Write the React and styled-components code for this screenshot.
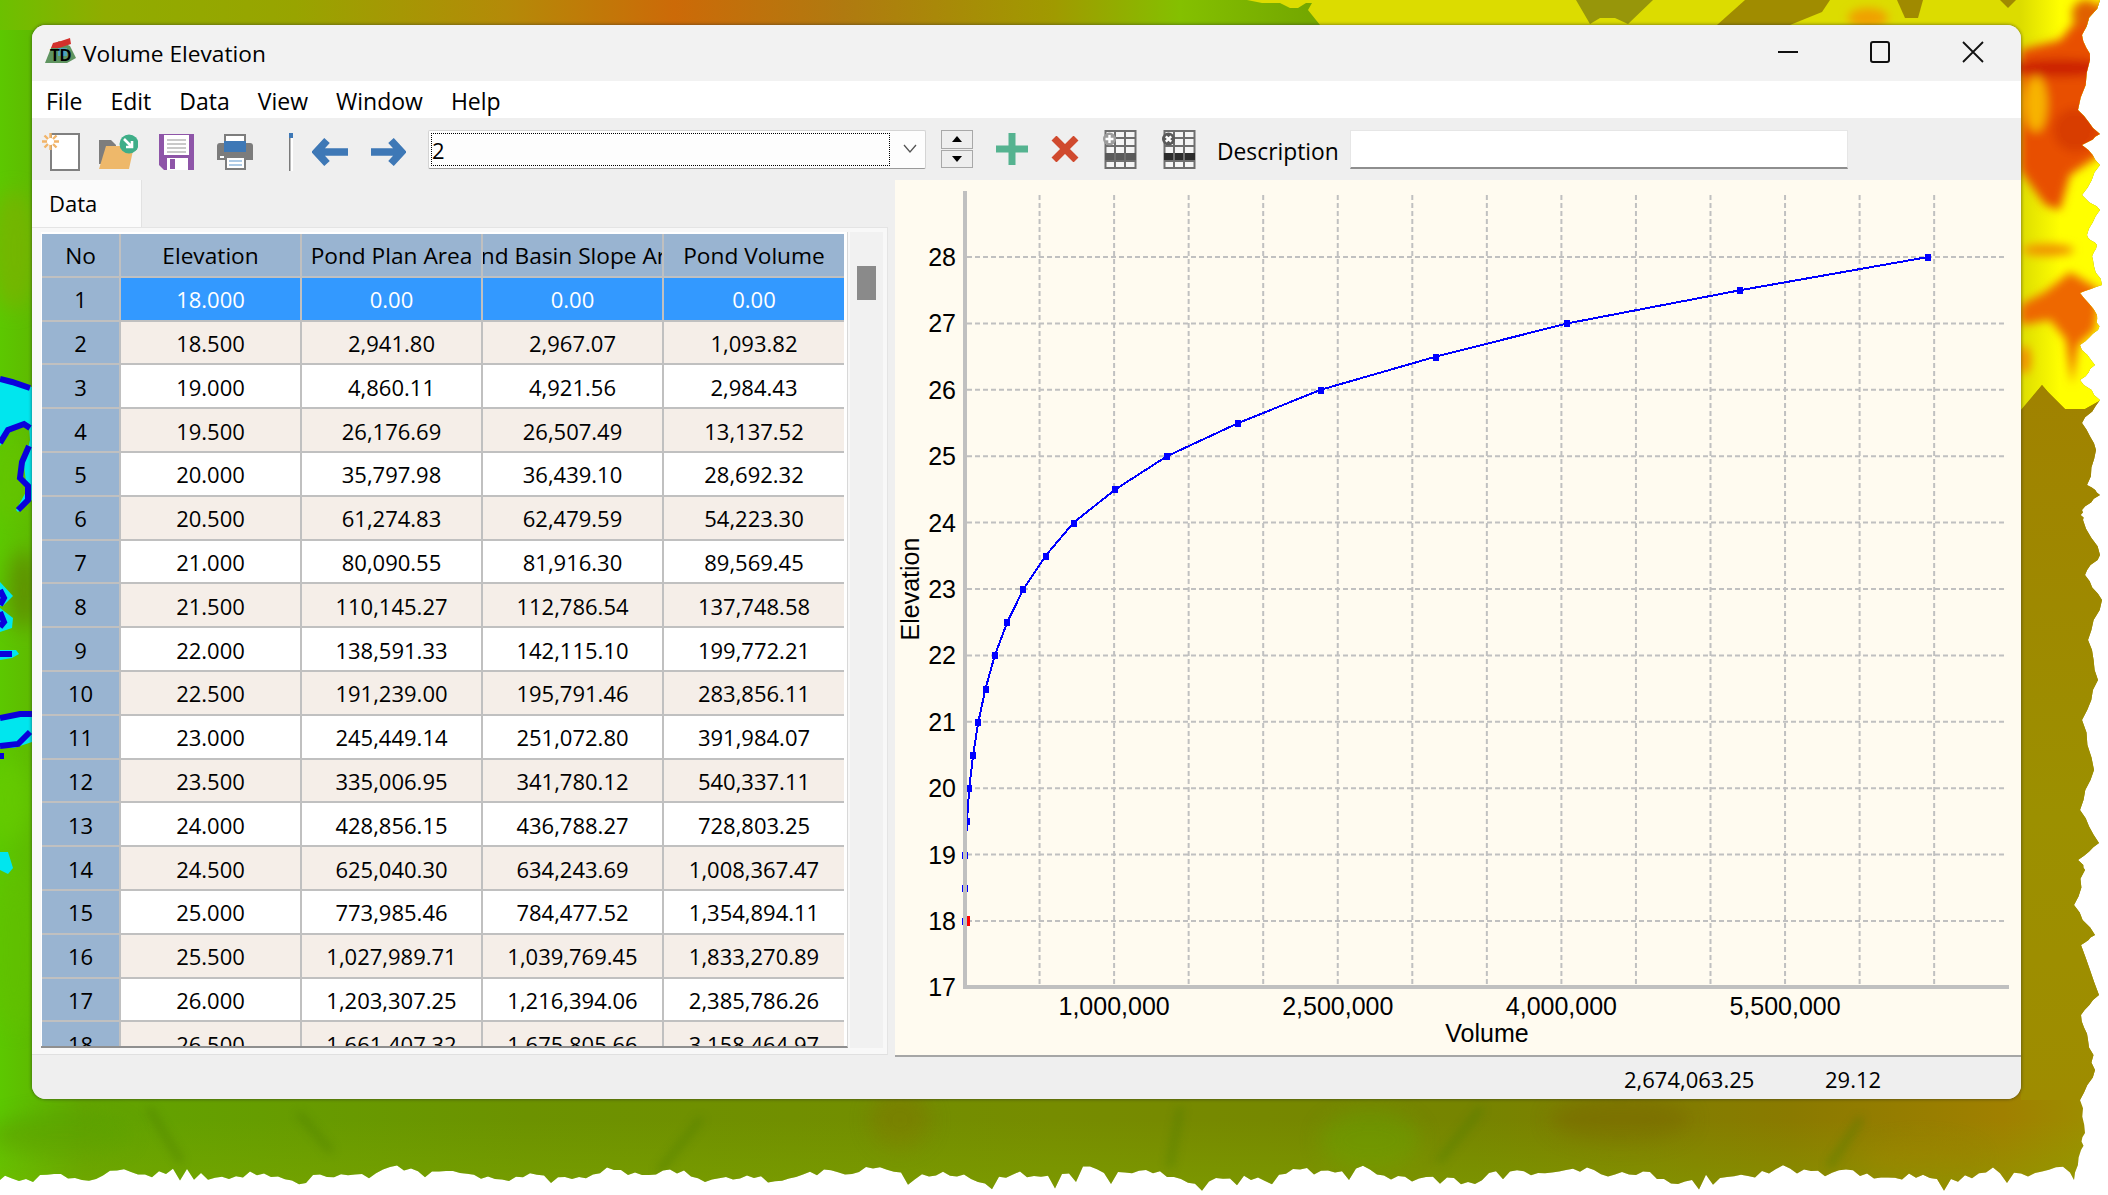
import React from "react";
import styled, { createGlobalStyle } from "styled-components";

const UI_FONT = `"Open Sans", "Noto Sans", sans-serif`;
const CHART_FONT = `"Liberation Sans", Arial, sans-serif`;

const GlobalStyle = createGlobalStyle`
  html, body { margin: 0; padding: 0; background: #fff; }
  body { font-family: ${UI_FONT}; color: #000; }
`;

const rows = [
  ["18.000", "0.00", "0.00", "0.00"],
  ["18.500", "2,941.80", "2,967.07", "1,093.82"],
  ["19.000", "4,860.11", "4,921.56", "2,984.43"],
  ["19.500", "26,176.69", "26,507.49", "13,137.52"],
  ["20.000", "35,797.98", "36,439.10", "28,692.32"],
  ["20.500", "61,274.83", "62,479.59", "54,223.30"],
  ["21.000", "80,090.55", "81,916.30", "89,569.45"],
  ["21.500", "110,145.27", "112,786.54", "137,748.58"],
  ["22.000", "138,591.33", "142,115.10", "199,772.21"],
  ["22.500", "191,239.00", "195,791.46", "283,856.11"],
  ["23.000", "245,449.14", "251,072.80", "391,984.07"],
  ["23.500", "335,006.95", "341,780.12", "540,337.11"],
  ["24.000", "428,856.15", "436,788.27", "728,803.25"],
  ["24.500", "625,040.30", "634,243.69", "1,008,367.47"],
  ["25.000", "773,985.46", "784,477.52", "1,354,894.11"],
  ["25.500", "1,027,989.71", "1,039,769.45", "1,833,270.89"],
  ["26.000", "1,203,307.25", "1,216,394.06", "2,385,786.26"],
  ["26.500", "1,661,407.32", "1,675,805.66", "3,158,464.97"],
];

const volumes = [
  0, 1094, 2984, 13138, 28692, 54223, 89569, 137749, 199772, 283856, 391984,
  540337, 728803, 1008367, 1354894, 1833271, 2385786, 3158465, 4040000, 5200000,
  6460000,
];

const menus = ["File", "Edit", "Data", "View", "Window", "Help"];

// small repeatable noise so the torn edge of the map is always the same
const noise = (n) => {
  const s = Math.sin(n * 12.9898) * 43758.5453;
  return s - Math.floor(s);
};

const rightEdge = [
  [2100, 0], [2082, 35], [2090, 60], [2078, 110], [2100, 134], [2082, 145],
  [2100, 165], [2082, 195], [2100, 210], [2087, 235], [2097, 245], [2093, 260],
  [2102, 285], [2080, 293], [2097, 315], [2098, 330], [2080, 345], [2095, 365],
  [2080, 380], [2100, 400], [2082, 423], [2096, 450], [2087, 485], [2100, 495],
  [2082, 510], [2083, 520], [2100, 555], [2085, 575], [2102, 600], [2088, 640],
  [2098, 680], [2082, 720], [2094, 770], [2080, 810], [2099, 843], [2078, 860],
  [2085, 870], [2074, 905], [2095, 935], [2081, 945], [2099, 995], [2081, 1015],
  [2088, 1040], [2095, 1070], [2080, 1100], [2085, 1133], [2081, 1150], [2074, 1180],
];

const tornEdge = () => {
  const pts = [];
  rightEdge.forEach(([x, y], i) => {
    const next = rightEdge[i + 1];
    pts.push([x, y]);
    if (next) {
      for (let k = 1; k < 4; k++) {
        pts.push([
          x + ((next[0] - x) * k) / 4 + (noise(i * 7 + k) - 0.5) * 4,
          y + ((next[1] - y) * k) / 4,
        ]);
      }
    }
  });
  for (let x = 2070; x >= 0; x -= 7) {
    const wave = Math.sin(x / 37) * 4 + Math.sin(x / 11) * 3;
    const spike = noise(x) > 0.93 ? 9 : 0;
    pts.push([x, 1175 + wave + (noise(x + 3) - 0.5) * 7 + spike]);
  }
  pts.push([0, 1180]);
  return `0,0 ${pts.map((p) => p.map((v) => v.toFixed(1)).join(",")).join(" ")}`;
};

const Page = styled.div`
  position: relative;
  width: 2108px;
  height: 1195px;
  overflow: hidden;
  padding: 25px 87px 96px 32px;
  box-sizing: border-box;
`;

const Backdrop = styled.svg`
  position: absolute;
  left: 0;
  top: 0;
`;

const Window = styled.div`
  position: relative;
  width: 1989px;
  height: 1074px;
  border-radius: 14px;
  overflow: hidden;
  background: #efefef;
  box-shadow: 0 0 3px 1px rgba(40, 40, 40, 0.4);
  display: flex;
  flex-direction: column;
  font-size: 22px;
`;

const TitleBar = styled.div`
  height: 56px;
  flex: none;
  background: #f2f2f2;
  display: flex;
  align-items: center;
  padding-left: 13px;
`;

const TitleText = styled.span`
  margin-left: 7px;
  font-size: 22.7px;
  flex: 1;
`;

const WinButton = styled.svg`
  width: 22px;
  height: 22px;
  flex: none;
  margin-right: ${(p) => p.$after}px;
  position: relative;
  top: -1px;
`;

const MenuBar = styled.div`
  height: 37px;
  flex: none;
  background: #fff;
  display: flex;
  align-items: center;
  padding: 4px 0 0 14px;
  box-sizing: border-box;
  gap: 28px;
  font-size: 23px;
`;

const MenuItem = styled.span`
  line-height: 33px;
`;

const Toolbar = styled.div`
  height: 62px;
  flex: none;
  background: #efefef;
  display: flex;
  align-items: center;
  padding-left: 10px;
`;

const Tool = styled.svg`
  flex: none;
  width: ${(p) => p.$w}px;
  height: ${(p) => p.$h}px;
  margin-left: ${(p) => p.$ml || 0}px;
  margin-top: ${(p) => p.$mt || 0}px;
`;

const Combo = styled.div`
  flex: none;
  width: 498px;
  height: 39px;
  margin-left: 22px;
  box-sizing: border-box;
  background: #fdfdfd;
  border: 1px solid #d4d4d4;
  border-bottom-color: #9a9a9a;
  border-radius: 2px;
  display: flex;
  align-items: center;
  padding: 2px 8px 2px 2px;
`;

const ComboText = styled.div`
  flex: 1;
  height: 100%;
  box-sizing: border-box;
  border: 1px dotted #000;
  font-size: 22px;
  line-height: 33px;
`;

const Chevron = styled.svg`
  width: 14px;
  height: 10px;
  margin-left: 13px;
`;

const Spin = styled.div`
  flex: none;
  width: 32px;
  height: 38px;
  margin-left: 15px;
  display: flex;
  flex-direction: column;
  gap: 1px;
`;

const SpinButton = styled.div`
  flex: 1;
  box-sizing: border-box;
  background: #eeeeee;
  border: 1px solid #a8a8a8;
  display: flex;
  align-items: center;
  justify-content: center;
  &::before {
    content: "";
    width: 0;
    height: 0;
    border-left: 5px solid transparent;
    border-right: 5px solid transparent;
    border-${(p) => (p.$down ? "top" : "bottom")}: 6px solid #000;
  }
`;

const DescLabel = styled.span`
  flex: none;
  width: 122px;
  margin-left: 21px;
  padding-top: 4px;
  font-size: 22.8px;
  white-space: nowrap;
`;

const DescInput = styled.div`
  flex: none;
  width: 498px;
  height: 39px;
  margin-left: 11px;
  box-sizing: border-box;
  background: #fff;
  border: 1px solid #e6e6e6;
  border-bottom: 2px solid #8e8e8e;
`;

const Body = styled.div`
  height: 877px;
  flex: none;
  display: grid;
  grid-template-columns: 856px 1126px;
  column-gap: 7px;
  background: #efefef;
`;

const LeftSide = styled.div`
  display: flex;
  flex-direction: column;
  min-height: 0;
`;

const TabStrip = styled.div`
  height: 47px;
  flex: none;
  display: flex;
`;

const Tab = styled.div`
  width: 110px;
  background: #fbfbfb;
  border-right: 1px solid #e2e2e2;
  box-sizing: border-box;
  padding-left: 17px;
  line-height: 47px;
  font-size: 22px;
`;

const TabPanel = styled.div`
  height: 828px;
  flex: none;
  box-sizing: border-box;
  background: #f8f8f8;
  border-top: 1px solid #e4e4e4;
  border-right: 1px solid #e4e4e4;
  border-bottom: 1px solid #e0e0e0;
  padding: 4px 0 0 9px;
  display: flex;
`;

const TableFrame = styled.div`
  width: 807px;
  height: 816px;
  flex: none;
  box-sizing: border-box;
  background: #fff;
  border-right: 1px solid #d8d8d8;
  border-bottom: 2px solid #8f8f8f;
  padding: 2px 0 0 1px;
  overflow: hidden;
`;

const Table = styled.div`
  display: grid;
  grid-template-columns: 77px 179px 179px 179px 180px;
  grid-auto-rows: 41.8px;
  gap: 2px;
  width: 802px;
  background: #c0c0c0;
`;

const Cell = styled.div`
  display: flex;
  align-items: center;
  justify-content: center;
  overflow: hidden;
  white-space: nowrap;
  font-size: ${(p) => (p.$head ? "22.7px" : "22px")};
  background: ${(p) => p.$bg};
  color: ${(p) => p.$fg || "#000"};
  > span {
    flex: none;
    padding-top: 1px;
  }
`;

const ScrollTrack = styled.div`
  width: 33px;
  height: 816px;
  flex: none;
  margin-left: 2px;
  background: #f1f1f1;
  padding: 34px 0 0 7px;
  box-sizing: border-box;
`;

const ScrollThumb = styled.div`
  width: 19px;
  height: 34px;
  background: #8a8a8a;
`;

const ChartPanel = styled.div`
  background: #fffbf0;
  border-bottom: 2px solid #a6a6a6;
  box-sizing: border-box;
`;

const Chart = styled.svg`
  display: block;
  font-family: ${CHART_FONT};
  font-size: 25px;
`;

const StatusBar = styled.div`
  flex: 1;
  background: #efefef;
  display: flex;
  align-items: center;
  font-size: 22px;
  padding: 1px 0 0 1592px;
`;

const StatusValue = styled.span`
  width: ${(p) => p.$w}px;
  flex: none;
`;

const xOf = (v) => 965 + (v / 500000) * 74.55;
const yOf = (e) => 257 + (28 - e) * 66.4;

function MapBackdrop() {
  return (
    <Backdrop width="2108" height="1195" viewBox="0 0 2108 1195">
      <defs>
        <clipPath id="torn">
          <polygon points={tornEdge()} />
        </clipPath>
        <linearGradient id="ground" x1="0" x2="1" y1="0" y2="0">
          <stop offset="0" stopColor="#5cc800" />
          <stop offset="0.04" stopColor="#62a400" />
          <stop offset="0.25" stopColor="#6c9200" />
          <stop offset="0.5" stopColor="#768c00" />
          <stop offset="0.7" stopColor="#768400" />
          <stop offset="0.85" stopColor="#8a7a00" />
          <stop offset="0.95" stopColor="#a08000" />
          <stop offset="1" stopColor="#9c9000" />
        </linearGradient>
        <linearGradient id="bottomGlow" x1="0" x2="0" y1="1120" y2="1180" gradientUnits="userSpaceOnUse">
          <stop offset="0" stopColor="#84ac00" stopOpacity="0" />
          <stop offset="1" stopColor="#84ac00" stopOpacity="0.35" />
        </linearGradient>
        <linearGradient id="topBand" x1="0" x2="2108" y1="0" y2="0" gradientUnits="userSpaceOnUse">
          <stop offset="0" stopColor="#6cc000" />
          <stop offset="0.05" stopColor="#90ac00" />
          <stop offset="0.14" stopColor="#98a400" />
          <stop offset="0.24" stopColor="#b48a08" />
          <stop offset="0.32" stopColor="#cc6a08" />
          <stop offset="0.4" stopColor="#b07a10" />
          <stop offset="0.5" stopColor="#a09a00" />
          <stop offset="0.56" stopColor="#84c000" />
          <stop offset="0.62" stopColor="#74a800" />
        </linearGradient>
        <linearGradient id="yellow" x1="2020" x2="2060" y1="0" y2="0" gradientUnits="userSpaceOnUse">
          <stop offset="0" stopColor="#dcdc00" />
          <stop offset="1" stopColor="#ffff00" />
        </linearGradient>
        <linearGradient id="olive" x1="0" x2="0" y1="390" y2="1100" gradientUnits="userSpaceOnUse">
          <stop offset="0" stopColor="#a08200" />
          <stop offset="0.6" stopColor="#9c9000" />
          <stop offset="1" stopColor="#9e8c00" />
        </linearGradient>
        <filter id="soft" x="-30%" y="-30%" width="160%" height="160%">
          <feGaussianBlur stdDeviation="5" />
        </filter>
        <filter id="wide" x="-40%" y="-40%" width="180%" height="180%">
          <feGaussianBlur stdDeviation="10" />
        </filter>
      </defs>
      <g clipPath="url(#torn)">
        <rect width="2108" height="1195" fill="url(#ground)" />
        <rect width="2108" height="30" fill="url(#topBand)" />

        {/* left strip shading */}
        <g filter="url(#wide)" opacity="0.65">
          <ellipse cx="14" cy="250" rx="24" ry="60" fill="#7fb000" />
          <ellipse cx="12" cy="480" rx="22" ry="40" fill="#66c400" />
          <ellipse cx="24" cy="590" rx="16" ry="40" fill="#5f7c00" />
          <ellipse cx="8" cy="800" rx="24" ry="40" fill="#68cc00" />
          <ellipse cx="14" cy="950" rx="26" ry="80" fill="#62c000" />
          <ellipse cx="60" cy="1135" rx="70" ry="22" fill="#5aa000" />
          <ellipse cx="900" cy="1120" rx="30" ry="30" fill="#7c7c00" />
          <ellipse cx="1370" cy="1140" rx="50" ry="30" fill="#6a9a00" />
          <ellipse cx="1620" cy="1120" rx="70" ry="24" fill="#7a6c00" />
          <ellipse cx="1920" cy="1160" rx="60" ry="18" fill="#a07c00" />
        </g>
        <rect y="1120" width="2108" height="75" fill="url(#bottomGlow)" />
        <g filter="url(#soft)" stroke="#4c7c00" strokeWidth="6" strokeLinecap="round" opacity="0.5">
          <path d="M150 1110 L180 1160" />
          <path d="M300 1115 L330 1150" />
          <path d="M700 1120 L660 1170" />
          <path d="M1180 1110 L1170 1165" />
          <path d="M1480 1110 L1440 1160" />
          <path d="M1860 1120 L1830 1165" />
        </g>

        {/* yellow plateau with the olive cut-outs */}
        <polygon
          points="1247,0 2108,0 2108,396 2085,409 2065,409 2048,392 2042,385 2020,411 2000,411 2000,30 1324,30 1308,10 1312,3 1306,3 1298,8 1290,8 1280,3 1262,3"
          fill="url(#yellow)"
        />
        <g fill="#97960a">
          <polygon points="1576,0 1653,0 1628,24 1615,18 1600,18 1590,24" />
          <polygon points="1717,25 1745,0 1830,0 1822,12 1790,25" fill="#a08c00" />
          <polygon points="1897,0 1923,0 1918,18 1905,18" fill="#a08a00" />
          <polygon points="2000,0 2016,0 2008,8" fill="#a08a00" />
        </g>

        {/* orange and red ground on the right */}
        <g filter="url(#soft)">
          <polygon points="2020,50 2060,40 2075,22 2108,0 2108,150 2070,175 2060,210 2045,205 2020,170" fill="#e85000" />
          <ellipse cx="2060" cy="68" rx="50" ry="9" fill="#cc2400" />
          <ellipse cx="2036" cy="104" rx="11" ry="28" fill="#f8b400" />
          <ellipse cx="2075" cy="130" rx="22" ry="22" fill="#d83c00" />
          <ellipse cx="2048" cy="250" rx="26" ry="6" fill="#f09000" />
          <polygon points="2020,305 2045,292 2070,272 2100,290 2095,330 2078,345 2072,385 2066,340 2050,320 2020,325" fill="#ee6800" />
          <ellipse cx="2024" cy="360" rx="7" ry="14" fill="#f09000" />
          <ellipse cx="1868" cy="18" rx="20" ry="10" fill="#f0a000" />
          <ellipse cx="2086" cy="14" rx="14" ry="14" fill="#e06000" />
        </g>
        <polygon points="2021,411 2042,385 2048,392 2065,409 2085,409 2108,396 2108,1100 2021,1100" fill="url(#olive)" />

        {/* water on the left edge */}
        <g fill="#00e6ee">
          <polygon points="0,378 32,387 32,500 18,512 16,510 27,490 24,466 30,440 29,425 12,430 0,446" />
          <polygon points="0,582 13,596 3,606 0,606" />
          <polygon points="0,608 13,618 12,628 0,632" />
          <polygon points="0,650 16,650 19,654 12,658 0,660" />
          <polygon points="0,716 32,712 32,742 14,748 0,748" />
          <polygon points="0,852 8,852 13,868 8,874 0,870" />
        </g>
        <g fill="none" stroke="#0a00dc" strokeWidth="6">
          <path d="M0 379 L12 382 L30 388" />
          <path d="M0 443 L8 430 L24 424 L30 428" />
          <path d="M29 446 L22 462 L20 478 L28 486 L28 500 L18 510" />
          <path d="M0 590 L4 598 L0 605" />
          <path d="M0 612 L4 622 L0 627" />
          <path d="M0 654 L12 654" />
          <path d="M0 718 L20 714 L32 714" />
          <path d="M0 746 L18 744 L30 732" />
          <path d="M0 756 L4 756" />
        </g>
      </g>
    </Backdrop>
  );
}

function AppIcon() {
  return (
    <Tool $w={31} $h={26} $mt={-5} viewBox="0 0 31 26">
      <polygon points="0,25 6,10 14,3 25,8 31,20 22,25" fill="#5f9460" />
      <polygon points="6,10 8,5 16,3 25,0 26,6 14,10" fill="#d3302c" />
      <rect x="13" y="10" width="9" height="8" fill="#4fa3b8" />
      <text x="5" y="23" fontFamily={CHART_FONT} fontSize="16" fontWeight="700" fill="#000">TD</text>
    </Tool>
  );
}

function GridIcon({ ml, dark, mark }) {
  const band = dark ? "#2c2c2c" : "#5a5a5a";
  return (
    <Tool $w={34} $h={39} $ml={ml} viewBox="0 0 34 39">
      <rect x="2.5" y="1" width="30" height="37" fill="#f4f4f4" stroke="#6e6e6e" strokeWidth="2" />
      <rect x="2" y="23" width="31" height="8" fill={band} />
      <path d="M12 1V38M22 1V38M2 8H33M2 16H33M2 31H33" stroke="#6e6e6e" strokeWidth="2" fill="none" />
      <circle cx="6.5" cy="9" r="6.5" fill={dark ? "#5a5a5a" : "#9c9c9c"} />
      <path d={mark === "plus" ? "M6.5 5V13M2.5 9H10.5" : "M3.8 6.3L9.2 11.7M9.2 6.3L3.8 11.7"} stroke="#fff" strokeWidth="2.4" />
    </Tool>
  );
}

function Toolbuttons() {
  return (
    <>
      <Tool $w={38} $h={38} $mt={5} viewBox="0 0 38 38">
        <rect x="9" y="1" width="28" height="36" fill="#fff" stroke="#808080" strokeWidth="2" />
        <g stroke="#f2b468" strokeWidth="2.4">
          <path d="M8.5 0V17M0 8.5H17M2.5 2.5L14.5 14.5M14.5 2.5L2.5 14.5" />
        </g>
        <circle cx="8.5" cy="8.5" r="3.5" fill="#fff" />
      </Tool>
      <Tool $w={39} $h={36} $ml={19} $mt={5} viewBox="0 0 39 36">
        <path d="M0 6H12L17 11V30H0Z" fill="#7d7d7d" />
        <polygon points="7,12 35,12 30,35 0,35" fill="#eeb86a" />
        <circle cx="30" cy="10" r="9.5" fill="#3fae88" />
        <path d="M25 5L33 13M33 7V13H27" stroke="#fff" strokeWidth="2.6" fill="none" />
      </Tool>
      <Tool $w={35} $h={36} $ml={21} $mt={5} viewBox="0 0 35 36">
        <polygon points="0,0 35,0 35,36 5,36 0,31" fill="#8e55a8" />
        <rect x="5" y="1" width="25" height="20" fill="#fff" />
        <path d="M8 6H27M8 10H27M8 14H27M8 18H27" stroke="#b8b8b8" strokeWidth="1.5" />
        <rect x="8" y="24" width="21" height="12" fill="#fff" />
        <rect x="11" y="25" width="5" height="10" fill="#8e55a8" />
      </Tool>
      <Tool $w={36} $h={36} $ml={23} $mt={5} viewBox="0 0 36 36">
        <rect x="8" y="1" width="20" height="10" fill="#fff" stroke="#7d7d7d" strokeWidth="2" />
        <path d="M3 9H33Q36 9 36 12V26H0V12Q0 9 3 9Z" fill="#7c7c7c" />
        <rect x="7" y="7" width="22" height="11" fill="#3e78b6" />
        <rect x="3" y="22" width="4" height="2" fill="#fff" />
        <rect x="9" y="23" width="19" height="12" fill="#fff" stroke="#7d7d7d" strokeWidth="2" />
        <path d="M12 27H25M12 31H25" stroke="#aecbe6" strokeWidth="2" />
      </Tool>
      <Tool $w={4} $h={38} $ml={36} $mt={5} viewBox="0 0 4 38">
        <rect x="0" y="0" width="4" height="38" fill="#fff" />
        <rect x="0" y="0" width="1.5" height="38" fill="#7a7a7a" />
        <rect x="0" y="0" width="4" height="5" fill="#3e78b6" />
      </Tool>
      <Tool $w={36} $h={28} $ml={19} $mt={5} viewBox="0 0 36 28">
        <path d="M15 2.5L4.5 14L15 25.5M5 14H36" fill="none" stroke="#3e78b6" strokeWidth="7.5" />
      </Tool>
      <Tool $w={35} $h={28} $ml={23} $mt={5} viewBox="0 0 35 28">
        <path d="M20 2.5L30.5 14L20 25.5M30 14H0" fill="none" stroke="#3e78b6" strokeWidth="7.5" />
      </Tool>
      <Combo>
        <ComboText>2</ComboText>
        <Chevron viewBox="0 0 14 10">
          <path d="M1 1L7 8L13 1" fill="none" stroke="#555" strokeWidth="1.3" />
        </Chevron>
      </Combo>
      <Spin>
        <SpinButton />
        <SpinButton $down />
      </Spin>
      <Tool $w={32} $h={32} $ml={23} viewBox="0 0 32 32">
        <path d="M16 0V32M0 16H32" stroke="#55b390" strokeWidth="7" />
      </Tool>
      <Tool $w={28} $h={26} $ml={23} viewBox="0 0 28 26">
        <path d="M3 2L25 24M25 2L3 24" stroke="#d04a2e" strokeWidth="7" />
      </Tool>
      <GridIcon ml={24} mark="plus" />
      <GridIcon ml={25} dark mark="cross" />
      <DescLabel>Description</DescLabel>
      <DescInput />
    </>
  );
}

function VolumeChart() {
  const xLines = Array.from({ length: 13 }, (_, i) => xOf((i + 1) * 500000));
  const yTicks = Array.from({ length: 12 }, (_, i) => 28 - i);
  const points = volumes.map((v, i) => [xOf(v), yOf(18 + i * 0.5)]);
  return (
    <Chart width="1126" height="875" viewBox="895 180 1126 875">
      {xLines.map((x) => (
        <line key={x} x1={x} x2={x} y1="195" y2="985" stroke="#c0c0c0" strokeWidth="2" strokeDasharray="5 3" />
      ))}
      {yTicks.slice(0, 11).map((e) => (
        <line key={e} x1="967" x2="2005" y1={yOf(e)} y2={yOf(e)} stroke="#c0c0c0" strokeWidth="2" strokeDasharray="5 3" />
      ))}
      <polyline points={points.map((p) => p.join(",")).join(" ")} fill="none" stroke="#0000ff" strokeWidth="2" shapeRendering="crispEdges" />
      {points.map(([x, y], i) => (
        <rect key={i} x={x - 3} y={y - 3} width="6" height="7" fill="#0000ff" shapeRendering="crispEdges" />
      ))}
      <rect x="963" y="191" width="4" height="798" fill="#c0c0c0" />
      <rect x="963" y="985" width="1046" height="4" fill="#c0c0c0" />
      <rect x="967" y="916" width="3" height="10" fill="#ff0000" />
      {yTicks.map((e) => (
        <text key={e} x="956" y={yOf(e) + 9} textAnchor="end">{e}</text>
      ))}
      {[1000000, 2500000, 4000000, 5500000].map((v) => (
        <text key={v} x={xOf(v)} y="1015" textAnchor="middle">{v.toLocaleString("en-US")}</text>
      ))}
      <text x="1487" y="1042" textAnchor="middle">Volume</text>
      <text transform="translate(919 589) rotate(-90)" textAnchor="middle">Elevation</text>
    </Chart>
  );
}

export default function App() {
  return (
    <Page>
      <GlobalStyle />
      <MapBackdrop />
      <Window>
        <TitleBar>
          <AppIcon />
          <TitleText>Volume Elevation</TitleText>
          <WinButton $after={70} viewBox="0 0 22 22">
            <path d="M1 11H21" stroke="#111" strokeWidth="2" />
          </WinButton>
          <WinButton $after={71} viewBox="0 0 22 22">
            <rect x="2" y="1" width="18" height="20" rx="2" fill="none" stroke="#111" strokeWidth="2" />
          </WinButton>
          <WinButton $after={37} viewBox="0 0 22 22">
            <path d="M1 1L21 21M21 1L1 21" stroke="#111" strokeWidth="1.8" />
          </WinButton>
        </TitleBar>
        <MenuBar>
          {menus.map((m) => (
            <MenuItem key={m}>{m}</MenuItem>
          ))}
        </MenuBar>
        <Toolbar>
          <Toolbuttons />
        </Toolbar>
        <Body>
          <LeftSide>
            <TabStrip>
              <Tab>Data</Tab>
            </TabStrip>
            <TabPanel>
              <TableFrame>
                <Table>
                  {["No", "Elevation", "Pond Plan Area", "Pond Basin Slope Area", "Pond Volume"].map((h) => (
                    <Cell key={h} $bg="#99b4d1" $head>
                      <span>{h}</span>
                    </Cell>
                  ))}
                  {rows.map((row, r) => (
                    <React.Fragment key={r}>
                      <Cell $bg="#99b4d1">
                        <span>{r + 1}</span>
                      </Cell>
                      {row.map((val, c) => (
                        <Cell
                          key={c}
                          $bg={r === 0 ? "#3399ff" : r % 2 ? "#f5eee8" : "#ffffff"}
                          $fg={r === 0 ? "#fff" : "#000"}
                        >
                          <span>{val}</span>
                        </Cell>
                      ))}
                    </React.Fragment>
                  ))}
                </Table>
              </TableFrame>
              <ScrollTrack>
                <ScrollThumb />
              </ScrollTrack>
            </TabPanel>
          </LeftSide>
          <ChartPanel>
            <VolumeChart />
          </ChartPanel>
        </Body>
        <StatusBar>
          <StatusValue $w={201}>2,674,063.25</StatusValue>
          <StatusValue $w={70}>29.12</StatusValue>
        </StatusBar>
      </Window>
    </Page>
  );
}
